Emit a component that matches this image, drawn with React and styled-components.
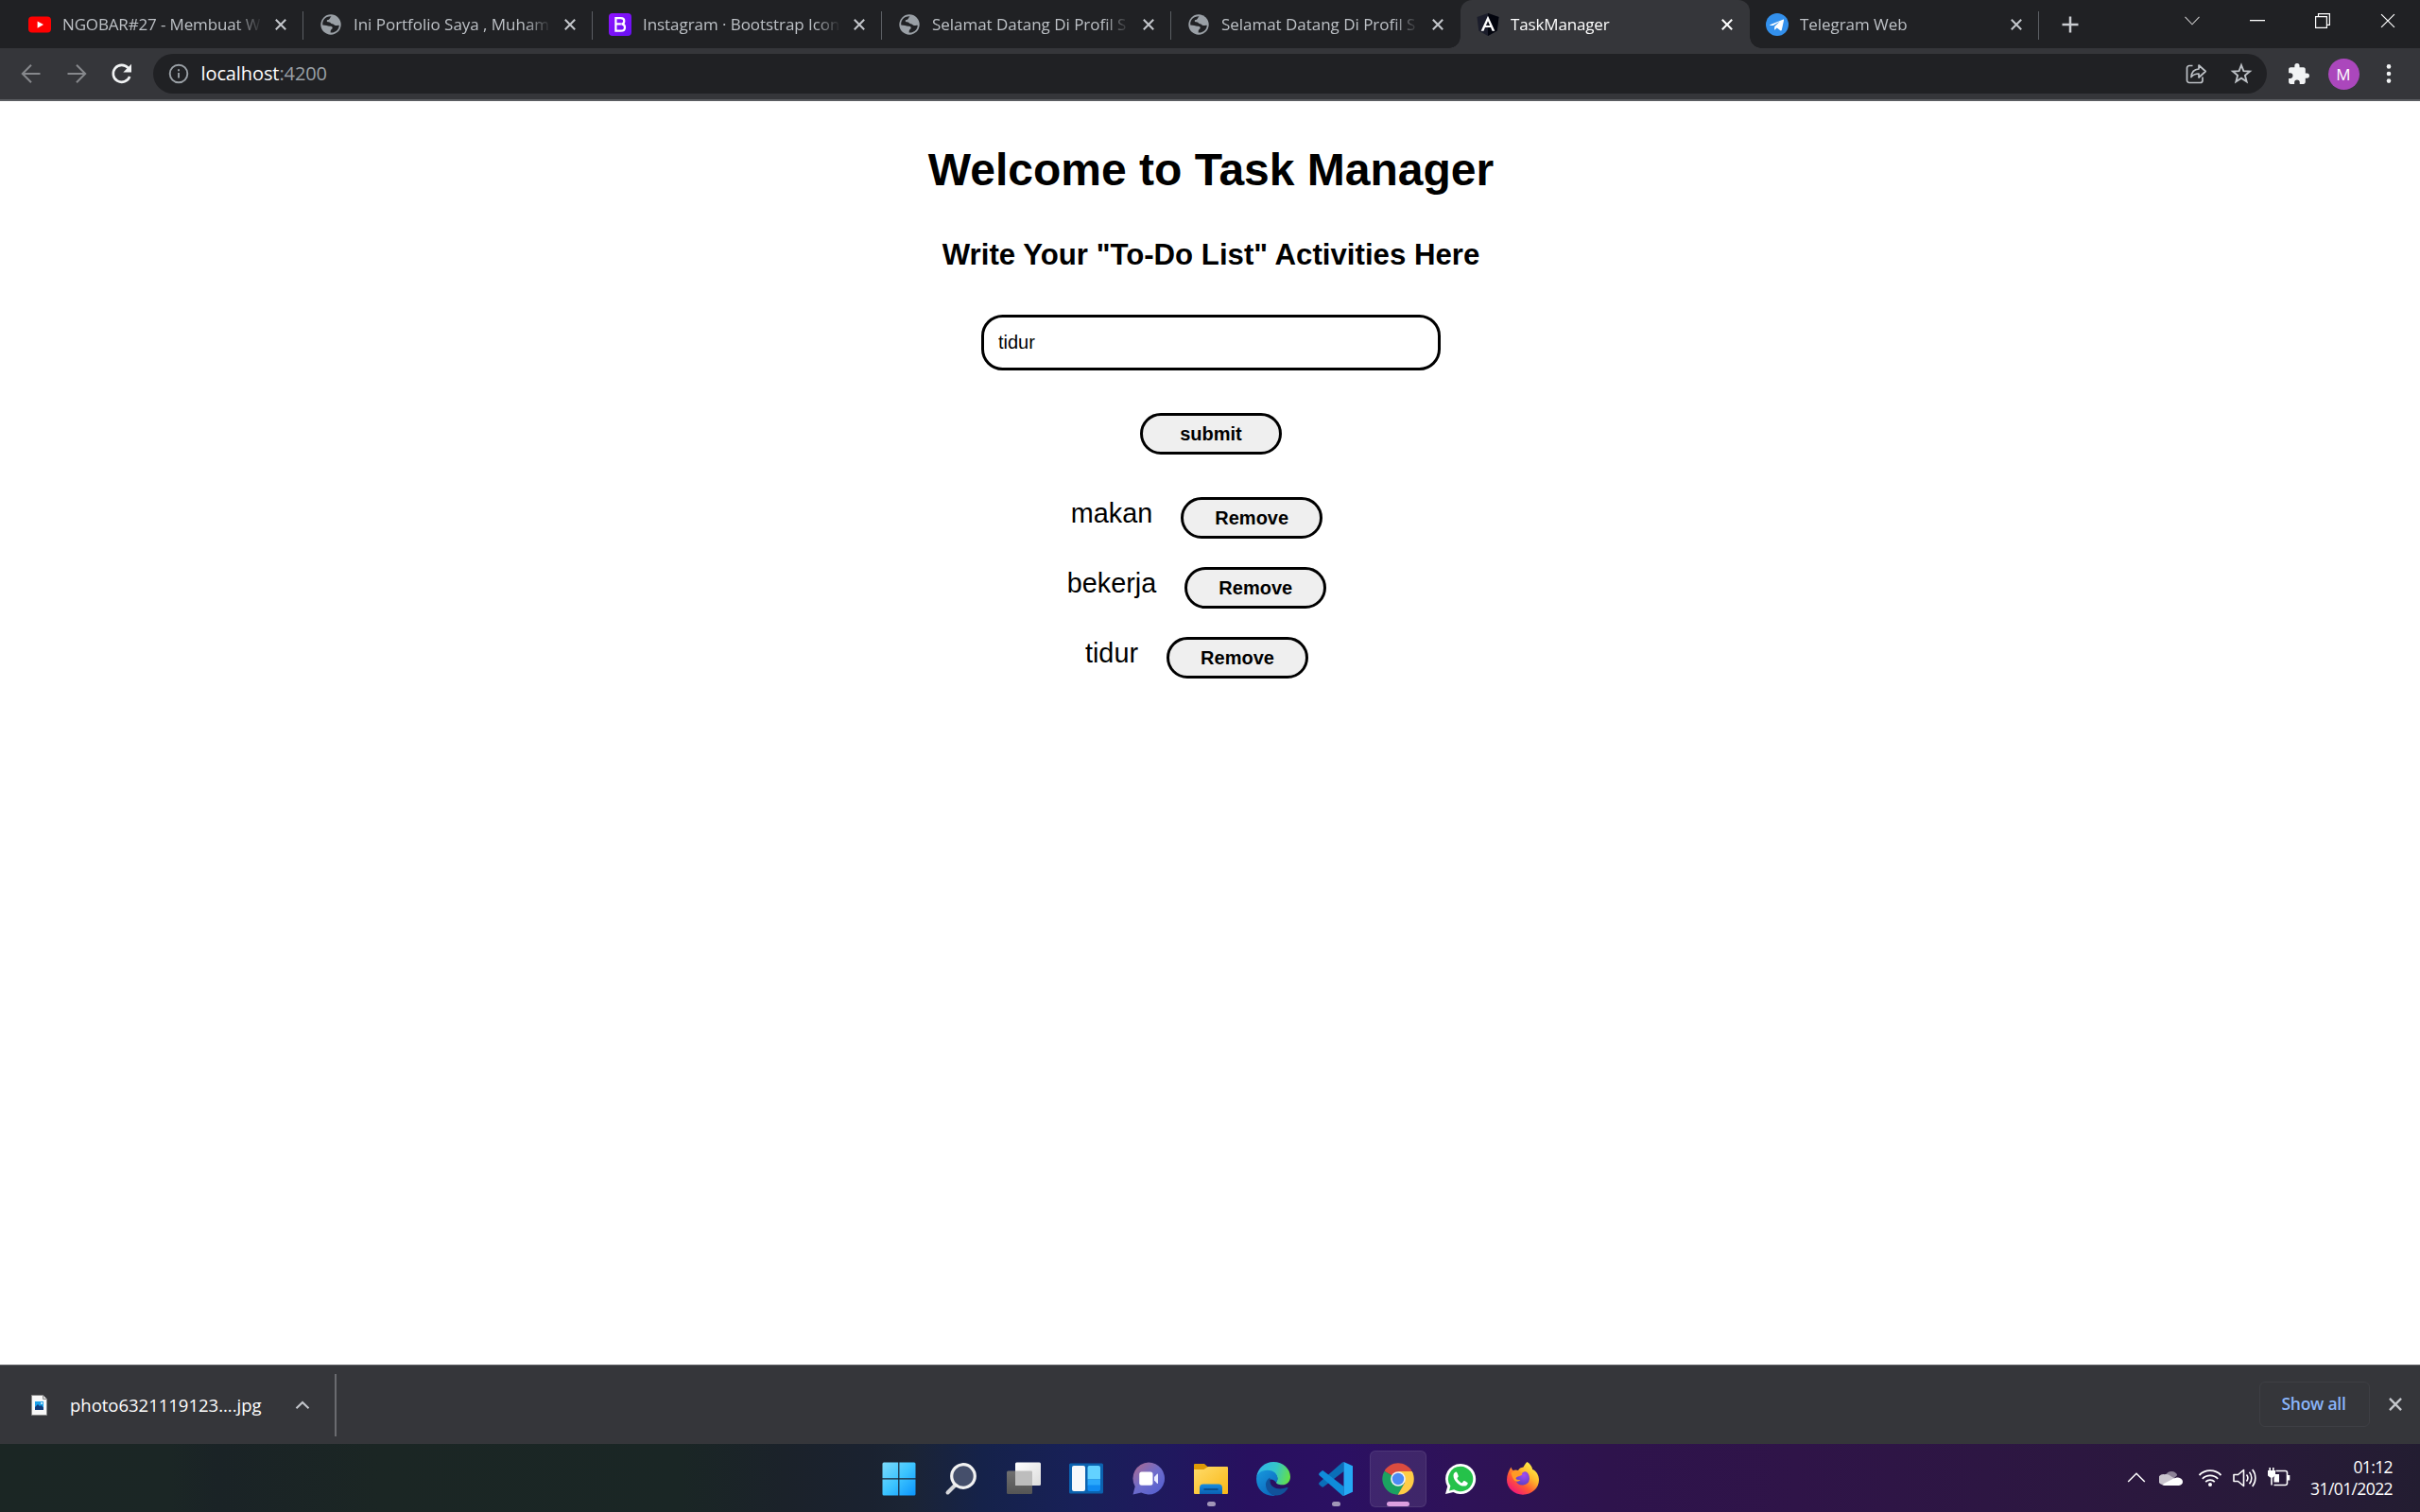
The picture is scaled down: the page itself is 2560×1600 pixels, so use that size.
import React from "react";
import styled, { createGlobalStyle, css } from "styled-components";

const GlobalStyle = createGlobalStyle`
  *, *::before, *::after { box-sizing: border-box; }
  body { margin: 0; background: #fff; overflow: hidden; }
  svg { display: block; flex: none; }
  button { cursor: pointer; }
`;

const uiFont = css`font-family: "Open Sans", "Noto Sans", sans-serif;`;

const Desktop = styled.div`
  width: 2560px;
  height: 1600px;
  display: flex;
  flex-direction: column;
  ${uiFont}
`;

/* ---------- Tab strip ---------- */

const TabStrip = styled.div`
  height: 51px;
  flex: none;
  display: flex;
  background: #202124;
  padding-left: 15px;
`;

const Tab = styled.div`
  width: 306px;
  height: 51px;
  display: flex;
  align-items: center;
  position: relative;
  padding: 0 18px 0 ${(p) => (p.$first ? 15 : 17)}px;
  color: ${(p) => (p.$active ? "#fff" : "#bdc1c6")};
  background: ${(p) => (p.$active ? "#35363a" : "transparent")};
  border-radius: 12px 12px 0 0;
  ${(p) =>
    p.$divided &&
    css`
      &::after {
        content: "";
        position: absolute;
        right: 0;
        top: 12px;
        width: 1.5px;
        height: 30px;
        background: #5b5e63;
      }
    `}
  ${(p) =>
    p.$active &&
    css`
      &::before,
      &::after {
        content: "";
        position: absolute;
        bottom: 0;
        width: 12px;
        height: 12px;
      }
      &::before {
        left: -12px;
        background: radial-gradient(circle at 0 0, transparent 11.5px, #35363a 12px);
      }
      &::after {
        right: -12px;
        background: radial-gradient(circle at 100% 0, transparent 11.5px, #35363a 12px);
      }
    `}
`;

const TabTitle = styled.span`
  flex: 1;
  min-width: 0;
  height: 26px;
  line-height: 26px;
  margin: 0 13px 0 12px;
  overflow: hidden;
  white-space: nowrap;
  font-size: 17px;
  letter-spacing: ${(p) => p.$tracking}px;
  -webkit-mask-image: linear-gradient(90deg, #000 calc(100% - 28px), transparent calc(100% - 1px));
  mask-image: linear-gradient(90deg, #000 calc(100% - 28px), transparent calc(100% - 1px));
`;

const NewTab = styled.div`
  width: 66px;
  display: flex;
  justify-content: center;
  align-items: center;
`;

const WindowControls = styled.div`
  margin-left: auto;
  height: 43px;
  display: flex;
`;

const WindowButton = styled.div`
  width: 69px;
  display: flex;
  justify-content: center;
  align-items: center;
`;

/* ---------- Toolbar ---------- */

const Toolbar = styled.div`
  height: 56px;
  flex: none;
  display: flex;
  align-items: center;
  padding: 0 9px 0 9px;
  background: #35363a;
  border-bottom: 2px solid #5b5d61;
`;

const ToolButton = styled.div`
  width: 48px;
  height: 42px;
  display: flex;
  justify-content: center;
  align-items: center;
`;

const AddressBar = styled.div`
  flex: 1;
  height: 42px;
  margin: 0 9px;
  padding: 0 3px 0 16px;
  display: flex;
  align-items: center;
  border-radius: 21px;
  background: #202124;
`;

const Url = styled.div`
  flex: 1;
  margin-left: 12.5px;
  font-size: 20px;
  line-height: 42px;
  letter-spacing: -0.1px;
  color: #9aa0a6;
  b { font-weight: 400; color: #fff; }
`;

const Avatar = styled.div`
  width: 33px;
  height: 33px;
  border-radius: 50%;
  background: #ab47bc;
  color: #fff;
  font-size: 17px;
  line-height: 33px;
  text-align: center;
`;

/* ---------- Page ---------- */

const Page = styled.main`
  flex: 1;
  min-height: 0;
  display: flex;
  flex-direction: column;
  align-items: center;
  padding: 1px 0 0 2px;
  background: #fff;
  color: #000;
  font-family: "Liberation Sans", Arial, sans-serif;
`;

const Heading = styled.h1`
  margin: 44px 0 0;
  font-size: 48px;
  line-height: 56px;
`;

const SubHeading = styled.h2`
  margin: 45px 0 0;
  font-size: 31.2px;
  line-height: 34px;
`;

const TaskInput = styled.input`
  width: 486px;
  height: 59px;
  margin: 46px 0 0;
  padding: 0 15px;
  border: 3px solid #000;
  border-radius: 22.5px;
  font: 20px "Liberation Sans", Arial, sans-serif;
  color: #000;
  background: #fff;
  outline: none;
`;

const PillButton = styled.button`
  width: 150px;
  height: 44px;
  padding: 0;
  border: 3px solid #000;
  border-radius: 22.5px;
  background: #efefef;
  color: #000;
  font: bold 20px "Liberation Sans", Arial, sans-serif;
`;

const SubmitRow = styled.div`
  margin-top: 45px;
  height: 44px;
`;

const TaskList = styled.ul`
  margin: 45px 0 0;
  padding: 0;
  list-style: none;
  display: flex;
  flex-direction: column;
  align-items: center;
  gap: 30px;
`;

const TaskRow = styled.li`
  display: flex;
  align-items: flex-start;
  gap: 30px;
  height: 44px;
  padding-right: 30px;
  font-size: 28.8px;
  line-height: 34px;
`;

/* ---------- Download shelf ---------- */

const Shelf = styled.div`
  height: 84px;
  flex: none;
  display: flex;
  align-items: center;
  background: #35363a;
  border-top: 1px solid #5f6165;
`;

const DownloadItem = styled.div`
  width: 356px;
  height: 66px;
  display: flex;
  align-items: center;
  padding-left: 33px;
  border-right: 2px solid #6a6b6f;
`;

const FileName = styled.span`
  width: 262px;
  padding-left: 24px;
  color: #fff;
  font-size: 18.5px;
  letter-spacing: -0.01px;
  white-space: nowrap;
`;

const ShowAll = styled.div`
  width: 117px;
  height: 48px;
  margin: 0 20px 2px auto;
  padding-right: 2px;
  border: 1px solid #3e3f44;
  border-radius: 6px;
  color: #8ab4f8;
  font-size: 17.5px;
  font-weight: 600;
  letter-spacing: -0.25px;
  line-height: 44px;
  text-align: center;
`;

const ShelfClose = styled.div`
  width: 33px;
  margin-bottom: 1px;
`;

/* ---------- Taskbar ---------- */

const Taskbar = styled.div`
  height: 72px;
  flex: none;
  display: grid;
  grid-template-columns: 1fr 726px 1fr;
  background: linear-gradient(
    90deg,
    #1b2624 0, #1b2625 180px, #1a2326 230px, #1b2624 400px, #1a2625 720px, #1b222a 830px, #1a2230 920px,
    #1b2434 960px, #15224a 1040px,
    #182058 1140px, #20185e 1240px, #28105f 1320px, #2b1062 1420px, #2e1258 1540px,
    #2e134c 1700px, #2f1448 1900px, #2c1740 2200px, #281a39 2400px, #231d31 2560px
  );
`;

const Dock = styled.div`
  grid-column: 2;
  display: flex;
  padding-left: 1px;
`;

const DockItem = styled.div`
  width: 60px;
  height: 60px;
  flex: none;
  margin: 7px 3px 0;
  display: flex;
  justify-content: center;
  align-items: center;
  position: relative;
  border-radius: 6px;
  ${(p) =>
    p.$state === "active" &&
    css`
      background: rgba(255, 255, 255, 0.09);
      border: 1px solid rgba(255, 255, 255, 0.08);
    `}
  ${(p) =>
    p.$state &&
    css`
      &::after {
        content: "";
        position: absolute;
        bottom: ${p.$state === "active" ? 0 : 1}px;
        width: ${p.$state === "active" ? 24 : 9}px;
        height: 5px;
        border-radius: 3px;
        background: ${p.$state === "active" ? "#dc9fe0" : "#a196b8"};
      }
    `}
`;

const Tray = styled.div`
  display: flex;
  align-items: center;
  justify-content: flex-end;
  padding: 0 29px 0 0;
`;

const TrayIcon = styled.div`
  margin-right: ${(p) => p.$space}px;
`;

const Clock = styled.div`
  color: #fff;
  font-size: 17.5px;
  line-height: 23px;
  letter-spacing: -0.6px;
  text-align: right;
`;

/* ---------- Icons ---------- */

const CloseIcon = ({ size = 12, color = "#c4c7cc", w = 2 }) => (
  <svg width={size} height={size} viewBox="0 0 12 12" stroke={color} strokeWidth={w}>
    <path d="M.8.8l10.4 10.4M11.2.8L.8 11.2" />
  </svg>
);

const YoutubeIcon = () => (
  <svg width="24" height="24" viewBox="0 0 24 24">
    <rect x="0" y="3.6" width="24" height="17" rx="4" fill="#f00" />
    <path d="M9.6 8.4v7.4l6.4-3.7z" fill="#fff" />
  </svg>
);

const GlobeIcon = () => (
  <svg width="24" height="24" viewBox="0 0 24 24">
    <circle cx="12" cy="12" r="10.7" fill="#9aa0a6" />
    <path
      d="M12.600 3.200c-1.500 1-1.300 2.400-2.500 3.200-1.100.7-2.300.4-2.400 1.700 0 1.300 1.500 1.300 2.700 1.300 1.400.1 1.600 1.800 3.100 1.900 1.400.1 1.900 1.400 3.300 1.700 1.300.2 2.700-.5 4-.1-.3 3.400-2.400 6.100-5.400 7.200-1.300.5-2.600.6-3.800.4.3-1.200-.2-1.900.6-2.900.8-1 1.700-1.200 1.500-2.400-.2-1.300-1.400-1.500-2.700-1.500-2.600 0-4.300-1.200-7.700-1.200-.7-4.300 2.300-9.500 9.300-9.300z"
      fill="#202124"
    />
    <path d="M14 3.500c3.800 1 6 3.900 6.400 7.500-1.200.8-3 .8-4-.1-.8-.8-.3-1.500-1.300-2.100-1-.5-2.400-.3-2.500-1.400-.1-1.400 1.800-1.300 1.900-2.400.1-.5-.2-1-.5-1.500z" fill="#9aa0a6" />
  </svg>
);

const BootstrapIcon = () => (
  <svg width="24" height="24" viewBox="0 0 24 24">
    <defs>
      <linearGradient id="bs" x1="0" y1="0" x2="1" y2="1">
        <stop offset="0" stopColor="#9013fe" />
        <stop offset="1" stopColor="#6610f2" />
      </linearGradient>
    </defs>
    <rect width="24" height="24" rx="4" fill="url(#bs)" />
    <path d="M7.400 5.200h5.300c2.500 0 3.600 1.300 3.600 3.100 0 1.700-1 2.900-2.900 3.100 2.300.2 3.600 1.500 3.600 3.500 0 2.400-1.600 3.800-4.300 3.800H7.400zM7.400 11.400h5.500" fill="none" stroke="#fff" strokeWidth="2.200" />
  </svg>
);

const AngularIcon = () => (
  <svg width="24" height="24" viewBox="0 0 24 24">
    <path d="M12 0l11.500 4-1.800 14.500L12 24 2.300 18.500.5 4z" fill="#1b1d2b" />
    <path d="M12 0l11.500 4-1.800 14.500L12 24z" fill="#02040d" />
    <path d="M12 2.800l-7.300 16h2.800L9 15.100h6l1.500 3.700h2.800zm0 5.400l2.100 4.700H9.900z" fill="#fff" fillRule="evenodd" />
  </svg>
);

const TelegramIcon = () => (
  <svg width="24" height="24" viewBox="0 0 24 24">
    <circle cx="12" cy="12" r="12" fill="#3390ec" />
    <path d="M4.300 12.200L18 6.700c.8-.3 1.200.1 1 1l-2.200 10c-.2.8-.8 1-1.500.5l-3.600-2.700-1.800 1.800c-.5.4-.9.2-.9-.4l.3-3 5.500-5.200-7 4.400-3.400-.1z" fill="#fff" />
  </svg>
);

const icons = {
  youtube: YoutubeIcon,
  globe: GlobeIcon,
  bootstrap: BootstrapIcon,
  angular: AngularIcon,
  telegram: TelegramIcon,
};

const ArrowIcon = ({ flip }) => (
  <svg width="22" height="22" viewBox="0 0 22 22" fill="none" stroke="#86888c" strokeWidth="2" transform={flip ? "scale(-1 1)" : undefined}>
    <path d="M20.500 11H2.500M11 1.800L1.800 11l9.200 9.200" />
  </svg>
);

const ReloadIcon = () => (
  <svg width="24" height="24" viewBox="0 0 24 24" fill="none" stroke="#f1f3f4" strokeWidth="2.600">
    <path d="M20.200 15A9 9 0 1 1 18.600 6" />
    <path d="M22 1.800v8.700h-8.700z" fill="#f1f3f4" stroke="none" />
  </svg>
);

const InfoIcon = () => (
  <svg width="22" height="22" viewBox="0 0 22 22" fill="none" stroke="#9aa0a6" strokeWidth="1.900">
    <circle cx="11" cy="11" r="9.300" />
    <path d="M11 10v5.500M11 6.300v2" />
  </svg>
);

const ShareIcon = () => (
  <svg width="24" height="24" viewBox="0 0 24 24" fill="none" stroke="#bdc1c6" strokeWidth="1.700">
    <path d="M8.500 3.500H5A2.500 2.500 0 0 0 2.500 6v13A2.500 2.500 0 0 0 5 21.500h11.500A2.500 2.500 0 0 0 19 19v-3.500" />
    <path d="M7 15.500c.3-5 3-8.200 8-8.500V3l7.200 6.500L15 16v-4c-3.600 0-6 1-8 3.500z" strokeLinejoin="round" />
  </svg>
);

const StarIcon = () => (
  <svg width="24" height="24" viewBox="0 0 24 24" fill="none" stroke="#bdc1c6" strokeWidth="1.900">
    <path d="M12 3l2.400 6.200 6.600.4-5.100 4.200 1.700 6.500L12 16.700l-5.600 3.600 1.700-6.500L3 9.600l6.600-.4z" />
  </svg>
);

const PuzzleIcon = () => (
  <svg width="25" height="25" viewBox="0 0 24 24" fill="#f1f3f4">
    <path d="M20.500 11H19V7c0-1.100-.9-2-2-2h-4V3.500a2.500 2.500 0 0 0-5 0V5H4c-1.100 0-2 .9-2 2v3.800h1.500a2.700 2.700 0 0 1 0 5.400H2V20c0 1.100.9 2 2 2h3.800v-1.500a2.700 2.700 0 0 1 5.400 0V22H17c1.100 0 2-.9 2-2v-4h1.500a2.500 2.500 0 0 0 0-5z" />
  </svg>
);

const DotsIcon = () => (
  <svg width="6" height="22" viewBox="0 0 6 22" fill="#f1f3f4">
    <circle cx="3" cy="3.400" r="2.300" />
    <circle cx="3" cy="11" r="2.300" />
    <circle cx="3" cy="18.600" r="2.300" />
  </svg>
);

const FileIcon = () => (
  <svg width="17" height="22" viewBox="0 0 17 22">
    <path d="M.5.500h12l4 4v17H.5z" fill="#f8f8f8" stroke="#8a8a8a" />
    <path d="M12.500.500v4h4" fill="#ddd" stroke="#8a8a8a" />
    <path d="M4 7h9v9H4z" fill="#1ba0ea" />
    <path d="M4 13l3-3 2 2 1.500-1 2.500 2.500V16H4z" fill="#123b7c" />
    <path d="M10.300 8h1.700v1.700h-1.700z" fill="#fff" />
  </svg>
);

const StartIcon = () => (
  <svg width="36" height="36" viewBox="0 0 36 36">
    <defs>
      <linearGradient id="win" gradientUnits="userSpaceOnUse" x1="0" y1="0" x2="36" y2="36">
        <stop offset="0" stopColor="#7fdcfb" />
        <stop offset=".5" stopColor="#3cc4ff" />
        <stop offset="1" stopColor="#0a93fb" />
      </linearGradient>
    </defs>
    <path d="M2 .5h15.200v16.700H.5V2A1.500 1.500 0 0 1 2 .5zM18.400.5H34A1.500 1.500 0 0 1 35.500 2v15.200H18.400zM.5 18.600h16.700v16.900H2A1.500 1.500 0 0 1 .5 34zM18.400 18.600h17.100V34a1.500 1.500 0 0 1-1.500 1.500H18.400z" fill="url(#win)" />
  </svg>
);

const SearchIcon = () => (
  <svg width="36" height="36" viewBox="0 0 36 36">
    <path d="M3.500 32.500l8-8" stroke="#d5d6da" strokeWidth="4" strokeLinecap="round" />
    <circle cx="20" cy="15" r="12.300" fill="#454f6b" stroke="#f2f2f2" strokeWidth="3.200" />
  </svg>
);

const TaskViewIcon = () => (
  <svg width="36" height="36" viewBox="0 0 36 36">
    <defs>
      <linearGradient id="tv" x1="0" y1="0" x2="1" y2="1">
        <stop offset="0" stopColor="#fff" />
        <stop offset="1" stopColor="#dcdcdc" />
      </linearGradient>
      <linearGradient id="tvd" x1="0" y1="0" x2="0" y2="1">
        <stop offset="0" stopColor="#707070" />
        <stop offset="1" stopColor="#555" />
      </linearGradient>
    </defs>
    <rect x="0" y="9.500" width="27" height="24.500" rx="1.500" fill="url(#tvd)" />
    <rect x="9" y=".5" width="27" height="24.500" rx="1.500" fill="url(#tv)" />
    <path d="M9 9.500h17a1 1 0 0 1 1 1V25H10a1 1 0 0 1-1-1z" fill="#bdbdbd" />
  </svg>
);

const WidgetsIcon = () => (
  <svg width="36" height="36" viewBox="0 0 36 36">
    <rect y="1.500" width="36" height="32" rx="1.500" fill="#0b62b0" />
    <rect x="3" y="4" width="14" height="27" rx="2" fill="#f7f9fb" />
    <path d="M21.500 4H31a2 2 0 0 1 2 2v12.500H19.500V6a2 2 0 0 1 2-2z" fill="#63d2ff" />
    <path d="M19.500 18.500H33V25H19.500z" fill="#2aa8fb" />
    <path d="M19.500 24.500H33V29a2 2 0 0 1-2 2h-9.500a2 2 0 0 1-2-2z" fill="#0f8af0" />
  </svg>
);

const ChatIcon = () => (
  <svg width="36" height="36" viewBox="0 0 36 36">
    <defs>
      <linearGradient id="chat" x1=".1" y1=".2" x2=".8" y2="1">
        <stop offset="0" stopColor="#9c6a9e" />
        <stop offset=".45" stopColor="#6e6ccb" />
        <stop offset="1" stopColor="#5560d0" />
      </linearGradient>
    </defs>
    <path d="M18 .5a17 17 0 1 1-7.800 32.100L1.500 34.500l2.200-8.500A17 17 0 0 1 18 .5z" fill="url(#chat)" />
    <rect x="8.200" y="10.500" width="14.300" height="14.300" rx="2.500" fill="#fff" />
    <path d="M24 16l3-3.200c.6-.6 1-.3 1 .5v9c0 .8-.4 1.100-1 .5L24 19.600z" fill="#e9ecff" />
  </svg>
);

const FolderIcon = () => (
  <svg width="36" height="36" viewBox="0 0 36 36">
    <defs>
      <linearGradient id="fold" x1="0" y1="0" x2="1" y2="1">
        <stop offset="0" stopColor="#ffdc6a" />
        <stop offset="1" stopColor="#f9b716" />
      </linearGradient>
      <linearGradient id="clip" x1="0" y1="0" x2="0" y2="1">
        <stop offset="0" stopColor="#168de0" />
        <stop offset="1" stopColor="#0a5fb3" />
      </linearGradient>
    </defs>
    <path d="M1 2h10l4 3.500h19V12H0V3a1 1 0 0 1 1-1z" fill="#de9a06" />
    <path d="M0 8h10.500l4.500-3H35a1 1 0 0 1 1 1v27a1 1 0 0 1-1 1H1a1 1 0 0 1-1-1z" fill="url(#fold)" />
    <path d="M6 34v-6.500a4 4 0 0 1 4-4h16a4 4 0 0 1 4 4V34z" fill="url(#clip)" />
    <path d="M11 29h14" stroke="#07437f" strokeWidth="1.500" strokeLinecap="round" />
  </svg>
);

const EdgeIcon = () => (
  <svg width="36" height="36" viewBox="0 0 36 36">
    <defs>
      <linearGradient id="eg1" x1="0" y1=".3" x2="1" y2=".5">
        <stop offset="0" stopColor="#2fb4e9" />
        <stop offset=".55" stopColor="#35c5c9" />
        <stop offset="1" stopColor="#62e04a" />
      </linearGradient>
      <linearGradient id="eg2" x1="0" y1="0" x2=".7" y2="1">
        <stop offset="0" stopColor="#1899dd" />
        <stop offset="1" stopColor="#0b68bd" />
      </linearGradient>
    </defs>
    <path d="M.2 16C1.500 6.500 9 0 18 0c10.500 0 18 7.500 18 15.700 0 5-3.700 8.600-8.600 8.600-4 0-6.400-1.300-6.400-2.500 0-.8 1.400-1.400 1.400-4 0-3.800-3.800-7.300-9.400-7.300C7.500 10.500 2.700 12 .2 16z" fill="url(#eg1)" />
    <path d="M.1 17C.6 12.500 5 8.800 11.500 8.800c7.500 0 11 4.700 11 8.700 0 2.400-1.300 3.500-1.500 4.300-1.400-1.600-3.200-3.300-5.500-3.300-4 0-5.500 6-2.500 11.500 2 3.600 5 5.500 7.500 6-1 .1-1.800 0-2.500 0C7 36-.6 27.500.1 17z" fill="url(#eg2)" />
    <path d="M14.500 16.500c-2.500 1.500-4.700 4.500-4.500 8 .3 6.500 5.500 11 11.500 11 5 0 9.500-3.500 11.800-7.500.4-.8-.2-1.300-1-.9-7.500 3.200-17.800 1-17.800-7 0-1.500.2-2.600 0-3.600z" fill="#11529a" />
  </svg>
);

const VsCodeIcon = () => (
  <svg width="36" height="36" viewBox="0 0 36 36">
    <path d="M26.500 0v10L5.300 26.300c-.7.6-1.500.6-2.200 0L.7 24.200c-.8-.8-.8-1.800 0-2.500L25 .6c.5-.4 1-.6 1.500-.6z" fill="#0a6eb8" />
    <path d="M26.500 36V26L5.300 9.700c-.7-.6-1.500-.6-2.200 0L.7 11.800c-.8.8-.8 1.800 0 2.500L25 35.400c.5.400 1 .6 1.500.6z" fill="#0f8cda" />
    <path d="M26.500 0L36 4.300v27.400L26.500 36z" fill="#25a9f5" />
  </svg>
);

const ChromeIcon = () => (
  <svg width="34" height="34" viewBox="0 0 34 34">
    <path d="M17 17L2.600 8.500a16.700 16.700 0 0 1 28.800 0z" fill="#db4c3f" />
    <path d="M17 17L2.500 8.700A16.700 16.700 0 0 0 16.800 33.700L24 21z" fill="#1ba261" />
    <path d="M17 9h14.700A16.700 16.700 0 0 1 16.700 33.700L24 21z" fill="#ffcd46" />
    <path d="M17 9h14.600L17 17 2.600 8.600z" fill="#db4c3f" />
    <path d="M17 9h14.700l.9 2.500-8 8z" fill="#ffcd46" />
    <circle cx="17" cy="17" r="7.800" fill="#f3f3f3" />
    <circle cx="17" cy="17" r="6.200" fill="#4c8bf5" />
  </svg>
);

const WhatsAppIcon = () => (
  <svg width="34" height="34" viewBox="0 0 34 34">
    <path d="M17 1a16 16 0 1 1-7.600 30L1 33l2.200-8A16 16 0 0 1 17 1z" fill="#fff" />
    <path d="M17 3.800a13.200 13.200 0 1 1-6.900 24.400L5 29.600l1.400-5A13.200 13.200 0 0 1 17 3.800z" fill="#25c24a" />
    <path d="M12.300 9.500c-.6 0-2.800 1.100-2.800 3.900 0 5.200 6 11.200 11.200 11.200 2.300 0 4-1.600 4-3.200 0-.6-3.300-2.400-4-2.400s-1.400 2.200-2.200 2.200c-1.200 0-5-3.600-5-4.800 0-.7 1.300-1.400 1.300-2.100 0-.6-1.300-4.800-2.500-4.800z" fill="#fff" />
  </svg>
);

const FirefoxIcon = () => (
  <svg width="36" height="36" viewBox="0 0 36 36">
    <defs>
      <linearGradient id="ff" x1=".85" y1=".1" x2=".2" y2=".95">
        <stop offset="0" stopColor="#fff04a" />
        <stop offset=".35" stopColor="#ffb52b" />
        <stop offset=".65" stopColor="#ff5a32" />
        <stop offset="1" stopColor="#f2147c" />
      </linearGradient>
      <radialGradient id="ffp" cx=".6" cy=".25" r=".8">
        <stop offset="0" stopColor="#a24cf2" />
        <stop offset="1" stopColor="#5a3fc4" />
      </radialGradient>
    </defs>
    <path d="M22.500 0c3.500 2.200 5.500 5.500 5.700 8 3.800 1.200 6.800 6 6.800 11a17 15.700 0 0 1-34 0C1 13.500 3 9.500 5.500 5.500c.5 1.500 1 2.500 2 3.500 1.500-.7 4-.8 5.500 0 .8-2 3-3.200 5.500-3.500C19.500 3.500 21 1 22.500 0z" fill="url(#ff)" />
    <path d="M11.500 15c2.500 0 4.500-1.500 6-3.500 4.500-3.500 7.500 1.500 7.500 6.500a7.500 7.500 0 0 1-14.500 1.500c-.5-1.500.5-3.500 1-4.500z" fill="url(#ffp)" />
    <path d="M5.500 11.500c3-1.500 6-2.500 9-1.500l3 3.300c-1.500 1.700-4.500 1.700-6.500 3.200-1.500 1.200.5 3 4.500 2.500-2 2.500-5.500 2-7 0-1.500-2-2.500-5-3-7.500z" fill="#ff9a25" />
  </svg>
);

const dock = [
  { icon: StartIcon },
  { icon: SearchIcon },
  { icon: TaskViewIcon },
  { icon: WidgetsIcon },
  { icon: ChatIcon },
  { icon: FolderIcon, state: "running" },
  { icon: EdgeIcon },
  { icon: VsCodeIcon, state: "running" },
  { icon: ChromeIcon, state: "active" },
  { icon: WhatsAppIcon },
  { icon: FirefoxIcon },
];

const TrayIcons = () => (
  <>
    <TrayIcon $space={13.5}>
      <svg width="20" height="24" viewBox="0 0 20 24" fill="none" stroke="#fff" strokeWidth="1.500">
        <path d="M1.200 16L10 7.200l8.800 8.800" />
      </svg>
    </TrayIcon>
    <TrayIcon $space={15.5}>
      <svg width="26" height="24" viewBox="0 0 26 24">
        <path d="M7 9a6.700 6.700 0 0 1 12.200 0l-5 5z" fill="#8c8296" />
        <path d="M6 8.200c3-.5 5 .8 7 2.300L19 14 3 19a5.500 5.500 0 0 1 3-10.800z" fill="#c9c4cd" />
        <path d="M3 19l11.500-6 4-1.500c4 0 6.500 2 6.500 4.600 0 2.300-1.800 3.900-4 3.900H6c-1.200 0-2.200-.3-3-1z" fill="#fff" />
      </svg>
    </TrayIcon>
    <TrayIcon $space={11}>
      <svg width="26" height="24" viewBox="0 0 26 24" fill="none" stroke="#fff" strokeWidth="1.800">
        <path d="M1.500 9a16.200 16.200 0 0 1 23 0M4.800 12.800a11.600 11.600 0 0 1 16.400 0M8.200 16.200a6.800 6.800 0 0 1 9.600 0" />
        <circle cx="13" cy="19" r="2" fill="#fff" stroke="none" />
      </svg>
    </TrayIcon>
    <TrayIcon $space={10.5}>
      <svg width="25" height="24" viewBox="0 0 25 24" fill="none" stroke="#fff" strokeWidth="1.600" strokeLinejoin="round">
        <path d="M1 8.500h4.500L11.500 3.500v17L5.500 15.500H1zM14.500 8.500c1.600 2 1.600 5 0 7M17.500 5.800c3.100 3.600 3.100 8.800 0 12.400M20.700 3c4.200 5.300 4.200 12.700 0 18" />
      </svg>
    </TrayIcon>
    <TrayIcon $space={20.5}>
      <svg width="26" height="24" viewBox="0 0 26 24" fill="none" stroke="#fff" strokeWidth="1.600">
        <path d="M9.500 4.500h10a2 2 0 0 1 2 2v11a2 2 0 0 1-2 2H7.500" />
        <path d="M21.500 9h2.800v5.500h-2.800zM9 8h4v8.500H7.500V12z" fill="#fff" stroke="none" />
        <path d="M1 4h8v5.500L6.500 11.500h-3L1 9.500z" fill="#fff" stroke="none" />
        <path d="M3.200 1v4M6.800 1v4M5 10v9.500" />
      </svg>
    </TrayIcon>
  </>
);

const tabs = [
  { icon: "youtube", title: "NGOBAR#27 - Membuat W", tracking: -0.15 },
  { icon: "globe", title: "Ini Portfolio Saya , Muham", tracking: -0.03 },
  { icon: "bootstrap", title: "Instagram · Bootstrap Icon", tracking: -0.06 },
  { icon: "globe", title: "Selamat Datang Di Profil S", tracking: -0.03 },
  { icon: "globe", title: "Selamat Datang Di Profil S", tracking: -0.03 },
  { icon: "angular", title: "TaskManager", tracking: -0.15, active: true },
  { icon: "telegram", title: "Telegram Web", tracking: -0.05 },
];

const tasks = ["makan", "bekerja", "tidur"];

export default function App() {
  return (
    <Desktop>
      <GlobalStyle />
      <TabStrip>
        {tabs.map((tab, i) => {
          const Icon = icons[tab.icon];
          const divided = !tab.active && !(tabs[i + 1] && tabs[i + 1].active);
          return (
            <Tab key={i} $first={i === 0} $active={tab.active} $divided={divided}>
              <Icon />
              <TabTitle $tracking={tab.tracking}>{tab.title}</TabTitle>
              <CloseIcon color={tab.active ? "#fff" : undefined} />
            </Tab>
          );
        })}
        <NewTab>
          <svg width="18" height="18" viewBox="0 0 18 18" stroke="#c9ccd0" strokeWidth="2.500">
            <path d="M9 .5v17M.5 9h17" />
          </svg>
        </NewTab>
        <WindowControls>
          <WindowButton>
            <svg width="16" height="10" viewBox="0 0 16 10" fill="none" stroke="#c8c8c9" strokeWidth="1.100">
              <path d="M.5.800L8 8.800 15.500.800" />
            </svg>
          </WindowButton>
          <WindowButton>
            <svg width="16" height="2" viewBox="0 0 16 2"><path d="M0 0h16v1.300H0z" fill="#fff" /></svg>
          </WindowButton>
          <WindowButton>
            <svg width="16" height="16" viewBox="0 0 16 16" fill="none" stroke="#fff" strokeWidth="1.200">
              <path d="M.6 3.600h11.800v11.800H.6zM3.500 3.600V.6h11.900v11.800h-3" />
            </svg>
          </WindowButton>
          <WindowButton>
            <CloseIcon size={16} color="#fff" w={0.9} />
          </WindowButton>
        </WindowControls>
      </TabStrip>

      <Toolbar>
        <ToolButton><ArrowIcon /></ToolButton>
        <ToolButton><ArrowIcon flip /></ToolButton>
        <ToolButton><ReloadIcon /></ToolButton>
        <AddressBar>
          <InfoIcon />
          <Url><b>localhost</b>:4200</Url>
          <ToolButton><ShareIcon /></ToolButton>
          <ToolButton><StarIcon /></ToolButton>
        </AddressBar>
        <ToolButton><PuzzleIcon /></ToolButton>
        <ToolButton><Avatar>M</Avatar></ToolButton>
        <ToolButton><DotsIcon /></ToolButton>
      </Toolbar>

      <Page>
        <Heading>Welcome to Task Manager</Heading>
        <SubHeading>Write Your "To-Do List" Activities Here</SubHeading>
        <TaskInput defaultValue="tidur" />
        <SubmitRow><PillButton>submit</PillButton></SubmitRow>
        <TaskList>
          {tasks.map((task) => (
            <TaskRow key={task}>
              {task}
              <PillButton>Remove</PillButton>
            </TaskRow>
          ))}
        </TaskList>
      </Page>

      <Shelf>
        <DownloadItem>
          <FileIcon />
          <FileName>photo6321119123....jpg</FileName>
          <svg width="16" height="10" viewBox="0 0 16 10" fill="none" stroke="#c4c7cc" strokeWidth="2">
            <path d="M1.500 8.300L8 2l6.500 6.300" />
          </svg>
        </DownloadItem>
        <ShowAll>Show all</ShowAll>
        <ShelfClose><CloseIcon size={14} /></ShelfClose>
      </Shelf>

      <Taskbar>
        <Dock>
          {dock.map(({ icon: Icon, state }, i) => (
            <DockItem key={i} $state={state}><Icon /></DockItem>
          ))}
        </Dock>
        <Tray>
          <TrayIcons />
          <Clock>
            <div>01:12</div>
            <div>31/01/2022</div>
          </Clock>
        </Tray>
      </Taskbar>
    </Desktop>
  );
}
